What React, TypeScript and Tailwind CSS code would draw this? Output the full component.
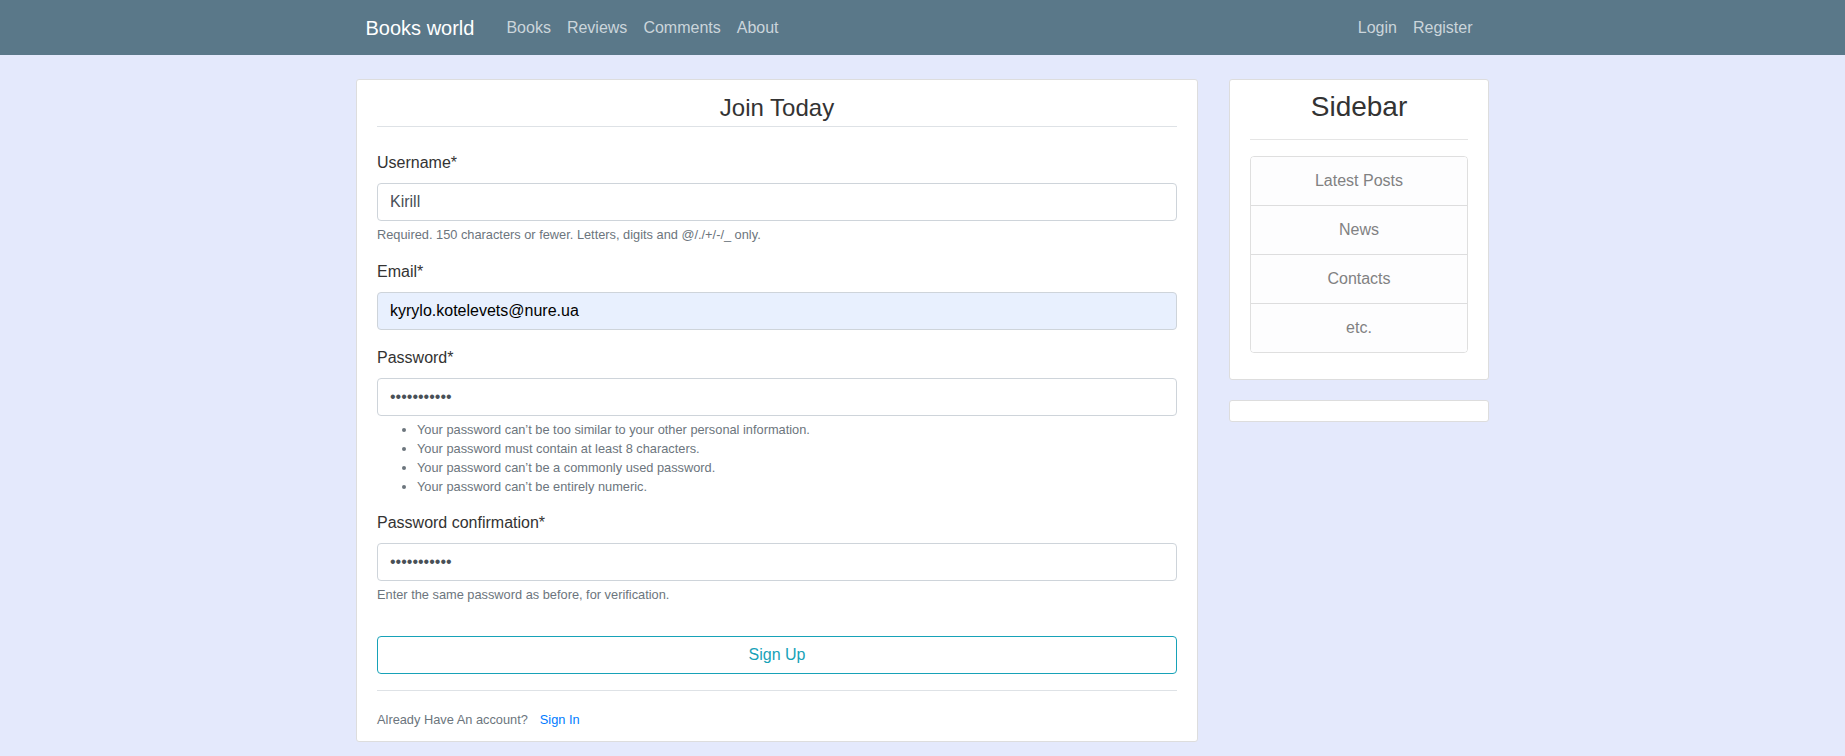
const navLinks = ["Books", "Reviews", "Comments", "About"];
const sidebarItems = ["Latest Posts", "News", "Contacts", "etc."];
const passwordRules = [
  "Your password can’t be too similar to your other personal information.",
  "Your password must contain at least 8 characters.",
  "Your password can’t be a commonly used password.",
  "Your password can’t be entirely numeric.",
];

function Field({
  label,
  type = "text",
  value,
  autofill,
  className = "mb-4",
  children,
}: {
  label: string;
  type?: string;
  value: string;
  autofill?: boolean;
  className?: string;
  children?: React.ReactNode;
}) {
  return (
    <div className={`flex flex-col ${className}`}>
      <label className="mb-2 block text-base leading-6">{label}</label>
      <input
        type={type}
        defaultValue={value}
        readOnly
        className={
          autofill
            ? "h-[38px] w-full rounded border border-[#ced4da] bg-[#e8f0fe] px-3 text-base text-black outline-none"
            : "h-[38px] w-full rounded border border-[#ced4da] bg-white px-3 text-base text-[#495057] outline-none"
        }
      />
      {children}
    </div>
  );
}

export default function App() {
  return (
    <div className="min-h-screen bg-[#e4e9fc] font-['Liberation_Sans',Arial,sans-serif] text-[#333]">
      <nav className="h-[55px] bg-[#5a7889]">
        <div className="mx-auto flex h-full w-[1114px] items-center justify-between">
          <div className="flex items-center">
            <a className="mr-6 text-[20px] leading-[30px] text-white">Books world</a>
            {navLinks.map((l) => (
              <a key={l} className="px-2 text-base leading-6 text-[#cbd5db]">
                {l}
              </a>
            ))}
          </div>
          <div className="-mr-px flex items-center">
            <a className="px-2 text-base leading-6 text-[#cbd5db]">Login</a>
            <a className="px-2 text-base leading-6 text-[#cbd5db]">Register</a>
          </div>
        </div>
      </nav>

      <main className="mx-auto flex w-[1133px] items-start gap-[31px] pt-6">
        <section className="flex w-[842px] flex-col rounded-[3px] border border-[#ddd] bg-white px-5 pt-2.5 pb-[9px]">
          <h2 className="mb-6 border-b border-[#dee2e6] text-center text-[24px] leading-9">Join Today</h2>

          <Field label="Username*" value="Kirill">
            <small className="mt-1 block text-[12.8px] leading-[19.2px] text-[#6c757d]">
              Required. 150 characters or fewer. Letters, digits and @/./+/-/_ only.
            </small>
          </Field>

          <Field label="Email*" value="kyrylo.kotelevets@nure.ua" autofill />

          <Field label="Password*" type="password" value="kirill12345" className="mb-[15px]">
            <ul className="mt-1 list-disc pl-10 text-[12.8px] leading-[19px] text-[#6c757d]">
              {passwordRules.map((r) => (
                <li key={r}>{r}</li>
              ))}
            </ul>
          </Field>

          <Field label="Password confirmation*" type="password" value="kirill12345" className="mb-8">
            <small className="mt-1 block text-[12.8px] leading-[19.2px] text-[#6c757d]">
              Enter the same password as before, for verification.
            </small>
          </Field>

          <button className="mb-4 h-[38px] w-full rounded border border-[#17a2b8] bg-white text-base text-[#17a2b8]">
            Sign Up
          </button>

          <div className="border-t border-[#dee2e6] pt-4 text-base leading-6">
            <small className="text-[12.8px] text-[#6c757d]">
              Already Have An account?
              <a className="ml-3 text-[#007bff]">Sign In</a>
            </small>
          </div>
        </section>

        <aside className="flex w-[260px] flex-col gap-5">
          <div className="rounded-[3px] border border-[#ddd] bg-white px-5 py-2.5">
            <h3 className="text-center text-[28px] leading-[1.2]">Sidebar</h3>
            <hr className="mt-[15px] mb-4 border-t border-black/10" />
            <ul className="mb-4 divide-y divide-black/[.125] overflow-hidden rounded border border-black/[.125]">
              {sidebarItems.map((item) => (
                <li key={item} className="bg-[#fdfdfe] py-3 text-center text-base leading-6 text-[#818182]">
                  {item}
                </li>
              ))}
            </ul>
          </div>
          <div className="h-[22px] rounded-[3px] border border-[#ddd] bg-white" />
        </aside>
      </main>
    </div>
  );
}
